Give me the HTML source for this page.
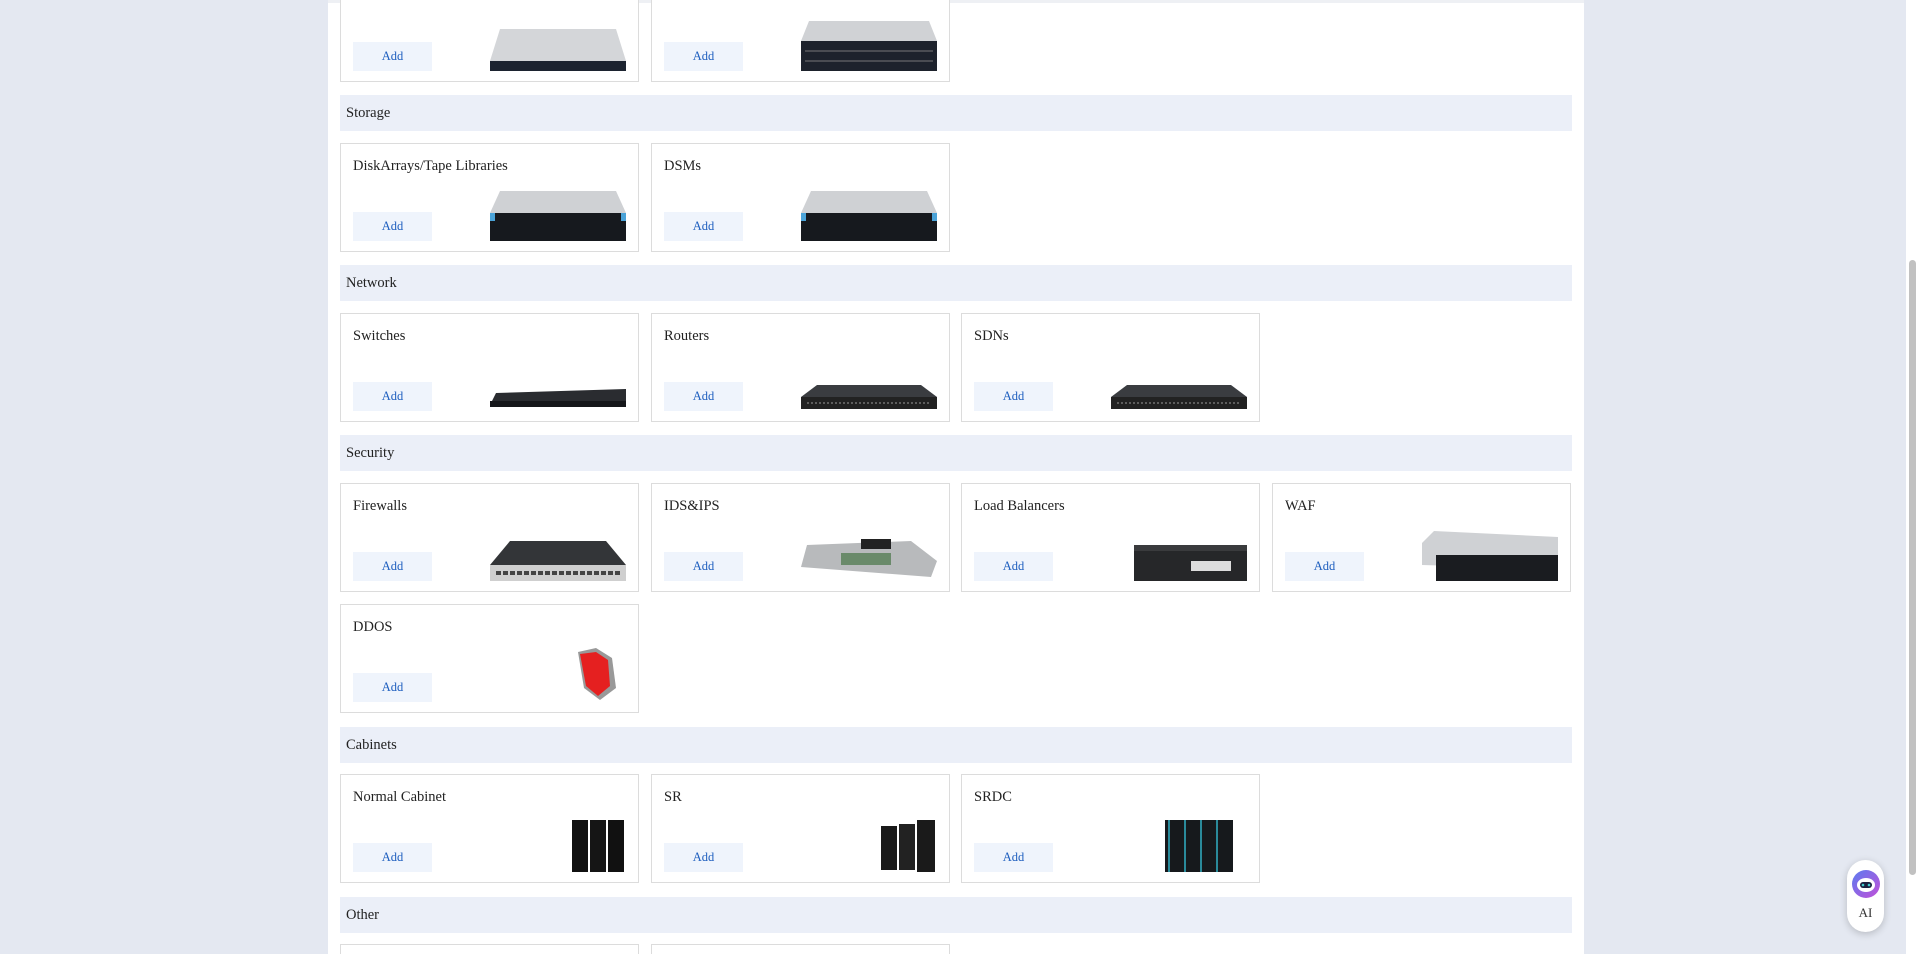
<!DOCTYPE html>
<html style="overflow:hidden;height:954px"><head><meta charset="utf-8"><style>
*{margin:0;padding:0;box-sizing:border-box}
body{width:1918px;height:954px;overflow:hidden;background:#e4e8f1;font-family:"Liberation Serif",serif;position:relative}
.panel{position:absolute;left:328px;top:0;width:1256px;height:954px;background:#fff;border-top:3px solid #eef0f4}
.card{position:absolute;width:299px;height:109px;border:1px solid #dcdcdc;background:#fff}
.card .t{position:absolute;left:12px;top:14px;font-size:14.5px;color:#222}
.card .b{position:absolute;left:12px;top:68px;width:79px;height:29px;background:#eff4fc;color:#1f5fbf;font-size:12.5px;text-align:center;line-height:29px}
.card svg{position:absolute;right:12px;bottom:10px}
.h{position:absolute;left:340px;width:1232px;height:36px;background:#ebeff8;font-size:14.5px;color:#222;line-height:36px;padding-left:6px}
.sb{position:absolute;left:1906px;top:0;width:12px;height:954px;background:#fff}
.th{position:absolute;left:1909px;top:260px;width:7px;height:615px;background:#c1c1c1;border-radius:4px}
.ai{position:absolute;left:1847px;top:860px;width:37px;height:72px;background:#fff;border-radius:19px;box-shadow:0 2px 8px rgba(0,0,0,.2);text-align:center;font-size:13px;color:#333}
</style></head><body>
<div class="panel"></div>
<svg width="0" height="0" style="position:absolute"><defs>
<g id="srv1"><polygon points="10,8 126,8 136,40 0,40" fill="#d4d6d9"/><rect x="0" y="40" width="136" height="10" fill="#1c2330"/></g>
<g id="srv2"><polygon points="8,0 128,0 136,20 0,20" fill="#d0d2d5"/><rect x="0" y="20" width="136" height="30" fill="#1d222c"/><g stroke="#777" stroke-width="1"><line x1="4" y1="30" x2="132" y2="30"/><line x1="4" y1="40" x2="132" y2="40"/></g></g>
<g id="sto"><polygon points="10,0 126,0 136,22 0,22" fill="#cfd1d4"/><rect x="0" y="22" width="136" height="28" fill="#16191e"/><rect x="0" y="22" width="5" height="8" fill="#4aa3d8"/><rect x="131" y="22" width="5" height="8" fill="#4aa3d8"/></g>
<g id="sw"><polygon points="6,32 136,28 136,40 0,44" fill="#2a2c30"/><rect x="0" y="40" width="136" height="6" fill="#15171a"/></g>
<g id="rt"><polygon points="16,24 120,24 136,36 0,36" fill="#3a3c40"/><rect x="0" y="36" width="136" height="12" fill="#222"/><line x1="6" y1="42" x2="130" y2="42" stroke="#999" stroke-dasharray="2 2"/></g>
<g id="fw"><polygon points="20,10 116,10 136,34 0,34" fill="#333538"/><rect x="0" y="34" width="136" height="16" fill="#cfcfcf"/><line x1="6" y1="42" x2="130" y2="42" stroke="#444" stroke-width="4" stroke-dasharray="5 2"/></g>
</defs></svg>

<div class="card" style="left:340px;top:-27px"><div class="b">Add</div><svg width="136" height="50"><use href="#srv1"/></svg></div>
<div class="card" style="left:651px;top:-27px"><div class="b">Add</div><svg width="136" height="50"><use href="#srv2"/></svg></div>

<div class="h" style="top:95px">Storage</div>
<div class="card" style="left:340px;top:143px"><div class="t">DiskArrays/Tape Libraries</div><div class="b">Add</div><svg width="136" height="50"><use href="#sto"/></svg></div>
<div class="card" style="left:651px;top:143px"><div class="t">DSMs</div><div class="b">Add</div><svg width="136" height="50"><use href="#sto"/></svg></div>

<div class="h" style="top:265px">Network</div>
<div class="card" style="left:340px;top:313px"><div class="t">Switches</div><div class="b">Add</div><svg width="136" height="50"><use href="#sw"/></svg></div>
<div class="card" style="left:651px;top:313px"><div class="t">Routers</div><div class="b">Add</div><svg width="136" height="50"><use href="#rt"/></svg></div>
<div class="card" style="left:961px;top:313px"><div class="t">SDNs</div><div class="b">Add</div><svg width="136" height="50"><use href="#rt"/></svg></div>

<div class="h" style="top:435px">Security</div>
<div class="card" style="left:340px;top:483px"><div class="t">Firewalls</div><div class="b">Add</div><svg width="136" height="50"><use href="#fw"/></svg></div>
<div class="card" style="left:651px;top:483px"><div class="t">IDS&amp;IPS</div><div class="b">Add</div><svg width="136" height="50"><polygon points="6,14 110,10 136,30 130,46 0,36" fill="#b8babc"/><rect x="60" y="8" width="30" height="10" fill="#222"/><rect x="40" y="22" width="50" height="12" fill="#6a8a6a"/></svg></div>
<div class="card" style="left:961px;top:483px"><div class="t">Load Balancers</div><div class="b">Add</div><svg width="136" height="50"><rect x="23" y="14" width="113" height="36" fill="#262729"/><rect x="23" y="14" width="113" height="6" fill="#3a3b3d"/><rect x="80" y="30" width="40" height="10" fill="#ddd"/></svg></div>
<div class="card" style="left:1272px;top:483px"><div class="t">WAF</div><div class="b">Add</div><svg width="136" height="50"><polygon points="12,0 136,6 136,38 0,34 0,12" fill="#cfd1d4"/><rect x="14" y="24" width="122" height="26" fill="#1a1c20"/></svg></div>
<div class="card" style="left:340px;top:604px"><div class="t">DDOS</div><div class="b">Add</div><svg width="44" height="54" style="right:20px"><path d="M4,4 L22,0 L38,10 L42,40 L26,52 L10,40 Z" fill="#999"/><path d="M6,6 L22,4 L34,12 L36,38 L24,48 L12,38 Z" fill="#e52020"/></svg></div>

<div class="h" style="top:727px">Cabinets</div>
<div class="card" style="left:340px;top:774px"><div class="t">Normal Cabinet</div><div class="b">Add</div><svg width="54" height="52"><rect x="0" y="0" width="16" height="52" fill="#111"/><rect x="18" y="0" width="16" height="52" fill="#151515"/><rect x="36" y="0" width="16" height="52" fill="#111"/></svg></div>
<div class="card" style="left:651px;top:774px"><div class="t">SR</div><div class="b">Add</div><svg width="56" height="52"><rect x="0" y="6" width="16" height="44" fill="#1a1a1a"/><rect x="18" y="4" width="16" height="46" fill="#222"/><rect x="36" y="0" width="18" height="52" fill="#1a1a1a"/></svg></div>
<div class="card" style="left:961px;top:774px"><div class="t">SRDC</div><div class="b">Add</div><svg width="68" height="52" style="right:26px"><rect width="68" height="52" fill="#16191c"/><g stroke="#2a8a9a" stroke-width="2"><line x1="4" y1="0" x2="4" y2="52"/><line x1="20" y1="0" x2="20" y2="52"/><line x1="36" y1="0" x2="36" y2="52"/><line x1="52" y1="0" x2="52" y2="52"/></g></svg></div>

<div class="h" style="top:897px">Other</div>
<div class="card" style="left:340px;top:944px;height:10px;border-bottom:none"></div>
<div class="card" style="left:651px;top:944px;height:10px;border-bottom:none"></div>

<div class="sb"></div><div class="th"></div>
<div class="ai"><svg width="30" height="30" style="margin-top:9px"><defs><linearGradient id="g" x1="0" y1="0" x2="1" y2="1"><stop offset="0" stop-color="#5b7cf0"/><stop offset="1" stop-color="#c24fd8"/></linearGradient></defs><circle cx="15" cy="15" r="14" fill="url(#g)"/><ellipse cx="15" cy="16" rx="9" ry="7" fill="#fff"/><rect x="9" y="13" width="12" height="6" rx="3" fill="#1b2140"/><circle cx="12" cy="16" r="1.3" fill="#4cc"/><circle cx="18" cy="16" r="1.3" fill="#4cc"/></svg><div style="margin-top:2px">AI</div></div>
</body></html>
